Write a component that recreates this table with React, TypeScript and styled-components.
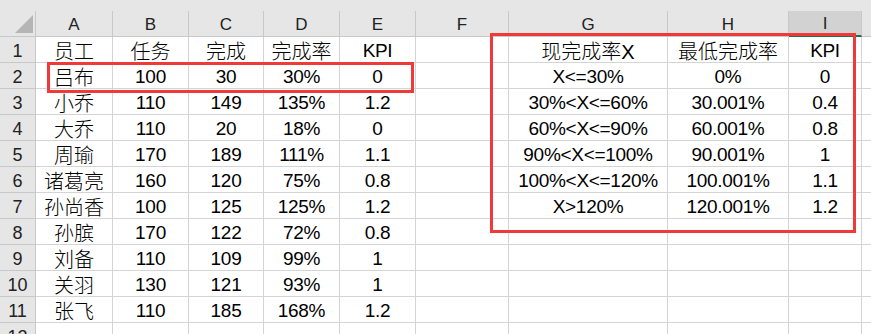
import styled, { createGlobalStyle, css } from "styled-components";

const GlobalStyle = createGlobalStyle`
  html, body {
    margin: 0;
    padding: 0;
    background: #ffffff;
    overflow: hidden;
  }
`;

// column widths incl. the 1px grid line on the right
const COL_WIDTHS = [36, 77, 76, 75, 76, 76, 93, 159, 121, 73, 40];
// the J header sits past the window edge, its letter is not visible
const LETTERS = ["A", "B", "C", "D", "E", "F", "G", "H", "I", ""];
const SELECTED_COL = "I";

const ROWS: string[][] = [
  ["员工", "任务", "完成", "完成率", "KPI", "", "现完成率X", "最低完成率", "KPI", ""],
  ["吕布", "100", "30", "30%", "0", "", "X<=30%", "0%", "0", ""],
  ["小乔", "110", "149", "135%", "1.2", "", "30%<X<=60%", "30.001%", "0.4", ""],
  ["大乔", "110", "20", "18%", "0", "", "60%<X<=90%", "60.001%", "0.8", ""],
  ["周瑜", "170", "189", "111%", "1.1", "", "90%<X<=100%", "90.001%", "1", ""],
  ["诸葛亮", "160", "120", "75%", "0.8", "", "100%<X<=120%", "100.001%", "1.1", ""],
  ["孙尚香", "100", "125", "125%", "1.2", "", "X>120%", "120.001%", "1.2", ""],
  ["孙膑", "170", "122", "72%", "0.8", "", "", "", "", ""],
  ["刘备", "110", "109", "99%", "1", "", "", "", "", ""],
  ["关羽", "130", "121", "93%", "1", "", "", "", "", ""],
  ["张飞", "110", "185", "168%", "1.2", "", "", "", "", ""],
  ["", "", "", "", "", "", "", "", "", ""],
];

const hasCjk = (s: string) => /[\u4e00-\u9fff]/.test(s);

const Sheet = styled.div`
  position: relative;
  width: 871px;
  height: 334px;
  overflow: hidden;
  background: #ffffff;
  font-family: "Liberation Sans", "Noto Sans CJK SC", Arial, sans-serif;
  color: #000000;
`;

const TopBand = styled.div`
  height: 11px;
  background: #e6e6e6;
`;

const Grid = styled.div`
  display: grid;
  grid-template-columns: ${COL_WIDTHS.map((w) => `${w}px`).join(" ")};
  grid-auto-rows: 26px;
`;

const cellBase = css`
  box-sizing: border-box;
  display: flex;
  align-items: center;
  justify-content: center;
  overflow: hidden;
  white-space: nowrap;
`;

const Corner = styled.div`
  ${cellBase};
  position: relative;
  background: #e6e6e6;
  border-right: 1px solid #c8c8c8;
  border-bottom: 1px solid #c8c8c8;

  &::after {
    content: "";
    position: absolute;
    left: 15px;
    top: 4px;
    width: 0;
    height: 0;
    border-left: 18px solid transparent;
    border-bottom: 18px solid #b5b5b5;
  }
`;

const ColHeader = styled.div<{ $selected?: boolean }>`
  ${cellBase};
  padding-top: 2px;
  font-size: 17px;
  color: #222222;
  background: ${(p) => (p.$selected ? "#d2d2d2" : "#e6e6e6")};
  border-right: 1px solid #c8c8c8;
  border-bottom: ${(p) => (p.$selected ? "2px solid #217346" : "1px solid #c8c8c8")};
`;

const RowHeader = styled.div`
  ${cellBase};
  padding-top: 3px;
  font-size: 18px;
  color: #222222;
  background: #e6e6e6;
  border-right: 1px solid #c8c8c8;
  border-bottom: 1px solid #c8c8c8;
`;

const Cell = styled.div<{ $cjk?: boolean }>`
  ${cellBase};
  padding-top: ${(p) => (p.$cjk ? "1px" : "3px")};
  font-size: ${(p) => (p.$cjk ? "20px" : "19px")};
  font-weight: ${(p) => (p.$cjk ? 300 : 400)};
  letter-spacing: ${(p) => (p.$cjk ? "0" : "-0.3px")};
  border-right: 1px solid #d4d4d4;
  border-bottom: 1px solid #d4d4d4;
`;

const Highlight = styled.div<{ $left: number; $top: number; $width: number; $height: number }>`
  position: absolute;
  left: ${(p) => p.$left}px;
  top: ${(p) => p.$top}px;
  width: ${(p) => p.$width}px;
  height: ${(p) => p.$height}px;
  box-sizing: border-box;
  border: 3px solid #f03a3a;
  pointer-events: none;
`;

export default function App() {
  return (
    <>
      <GlobalStyle />
      <Sheet>
        <TopBand />
        <Grid>
          <Corner />
          {LETTERS.map((l, i) => (
            <ColHeader key={i} $selected={l === SELECTED_COL}>
              {l}
            </ColHeader>
          ))}
          {ROWS.map((row, r) => (
            <Row key={r} index={r + 1} cells={row} />
          ))}
        </Grid>
        <Highlight $left={47} $top={62} $width={367} $height={31} />
        <Highlight $left={490} $top={33} $width={366} $height={200} />
      </Sheet>
    </>
  );
}

function Row({ index, cells }: { index: number; cells: string[] }) {
  return (
    <>
      <RowHeader>{index}</RowHeader>
      {cells.map((text, c) => (
        <Cell key={c} $cjk={hasCjk(text)}>
          {text}
        </Cell>
      ))}
    </>
  );
}
